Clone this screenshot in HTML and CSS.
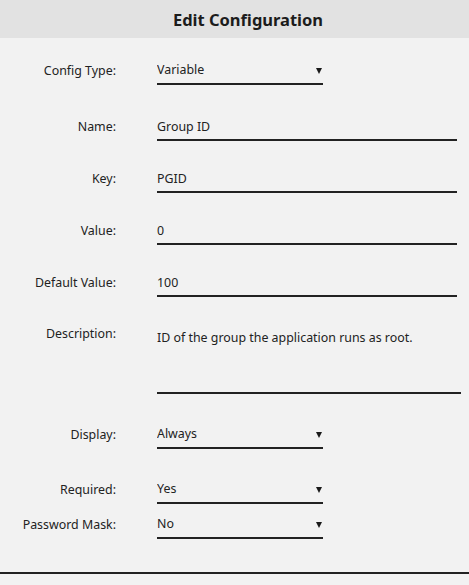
FILE: index.html
```html
<!DOCTYPE html>
<html lang="en">
<head>
  <meta charset="UTF-8" />
  <meta name="viewport" content="width=device-width, initial-scale=1.0"/>
  <title>Edit Configuration</title>
  <link rel="stylesheet" href="styles.css">
</head>
<body>

  <header class="dialog-header">
    <h1>Edit Configuration</h1>
  </header>

  <form class="config-form">
    <div class="row row-first">
      <label class="label">Config Type:</label>
      <div class="select-wrap">
        <select class="field select">
          <option>Variable</option>
        </select>
      </div>
    </div>

    <div class="row">
      <label class="label">Name:</label>
      <input class="field text" type="text" value="Group ID">
    </div>

    <div class="row">
      <label class="label">Key:</label>
      <input class="field text" type="text" value="PGID">
    </div>

    <div class="row">
      <label class="label">Value:</label>
      <input class="field text" type="text" value="0">
    </div>

    <div class="row">
      <label class="label">Default Value:</label>
      <input class="field text" type="text" value="100">
    </div>

    <div class="row row-top">
      <label class="label">Description:</label>
      <textarea class="field area">ID of the group the application runs as root.</textarea>
    </div>

    <div class="row row-wide">
      <label class="label">Display:</label>
      <div class="select-wrap">
        <select class="field select">
          <option>Always</option>
        </select>
      </div>
    </div>

    <div class="row row-wide">
      <label class="label">Required:</label>
      <div class="select-wrap">
        <select class="field select">
          <option>Yes</option>
        </select>
      </div>
    </div>

    <div class="row row-tight">
      <label class="label">Password Mask:</label>
      <div class="select-wrap">
        <select class="field select">
          <option>No</option>
        </select>
      </div>
    </div>
  </form>

  <footer class="dialog-footer"></footer>

</body>
</html>
```

FILE: styles.css
```css
body {
  margin: 0;
  background: #f2f2f2;
  color: #222;
  font-family: 'Noto Sans', 'Open Sans', sans-serif;
  font-size: 12.4px;
}

.dialog-header {
  height: 38px;
  background: #e2e2e2;
  display: flex;
  align-items: center;
  justify-content: center;
  padding-left: 27px;
}

.dialog-header h1 {
  margin: 0;
  font-size: 16.5px;
  font-weight: bold;
  color: #1c1c1c;
}

.config-form {
  padding-top: 19px;
  padding-bottom: 33px;
}

.row {
  display: flex;
  align-items: center;
  gap: 41px;
  margin-top: 24px;
}

.row-first { margin-top: 0; }
.row-first + .row { margin-top: 28px; }
.row-top { align-items: flex-start; }
.row-wide { margin-top: 27px; }
.row-tight { margin-top: 7px; }

.label {
  width: 116px;
  text-align: right;
  line-height: 26px;
  flex-shrink: 0;
}

.field {
  box-sizing: border-box;
  font: inherit;
  color: inherit;
  background: transparent;
  border: none;
  border-bottom: 2px solid #222;
  border-radius: 0;
  outline: none;
  padding: 0;
  margin: 0;
  height: 28px;
  line-height: 26px;
}

.text { width: 300px; }

.area {
  width: 304px;
  height: 73px;
  padding-top: 4px;
  resize: none;
  overflow: hidden;
}

.select-wrap {
  position: relative;
  width: 166px;
}

.select {
  width: 100%;
  appearance: none;
  -webkit-appearance: none;
}

/* small dropdown arrow */
.select-wrap::after {
  content: '';
  position: absolute;
  right: 1px;
  top: 11px;
  border-left: 3px solid transparent;
  border-right: 3px solid transparent;
  border-top: 6px solid #1a1a1a;
  pointer-events: none;
}

.dialog-footer {
  border-top: 2px solid #222;
}
```
